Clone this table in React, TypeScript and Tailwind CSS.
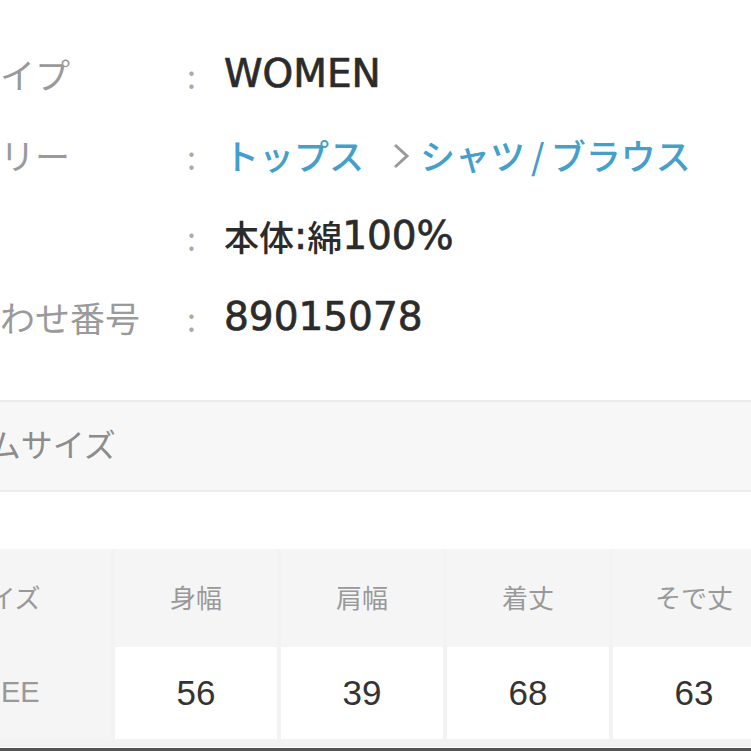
import React from "react";

const jp = { fontFamily: '"Noto Sans CJK JP", "Noto Sans", sans-serif' };
const num = { fontFamily: '"Liberation Sans", Arial, sans-serif' };
const lat = { fontFamily: '"DejaVu Sans", "Noto Sans CJK JP", sans-serif' };

function Row({ label, children }: { label: string; children: React.ReactNode }) {
  return (
    <div className="flex h-[81px] items-center">
      <div className="ml-[-105px] w-[290px] shrink-0 whitespace-nowrap text-[35px] text-[#9a9a9a]">{label}</div>
      <div className="w-[39px] shrink-0 pl-[2px] text-[32px] text-[#aaaaaa]">:</div>
      <div className="flex items-center whitespace-nowrap text-[35px] font-medium text-[#2b2b2b]">{children}</div>
    </div>
  );
}

function L({ children }: { children: React.ReactNode }) {
  return (
    <span className="text-[39px] font-normal [-webkit-text-stroke:0.7px_#2b2b2b]" style={lat}>
      {children}
    </span>
  );
}

export default function App() {
  const heads = ["身幅", "肩幅", "着丈", "そで丈"];
  const vals = ["56", "39", "68", "63"];
  return (
    <div className="relative h-[751px] w-[751px] overflow-hidden bg-white" style={jp}>
      <div className="pt-[34px]">
        <Row label="性別タイプ">
          <L>WOMEN</L>
        </Row>
        <Row label="カテゴリー">
          <span className="text-[#449fca]">トップス</span>
          <svg width="18" height="28" viewBox="0 0 18 28" className="ml-[28px] mr-[10px]">
            <path d="M3 3 L15 14 L3 25" fill="none" stroke="#9a9a9a" strokeWidth="3" />
          </svg>
          <span className="text-[#449fca]">
            シャツ<span className="mx-[6px]">/</span>ブラウス
          </span>
        </Row>
        <Row label="素材">
          本体<L>:</L>綿<L>100%</L>
        </Row>
        <Row label="問い合わせ番号">
          <L>89015078</L>
        </Row>
      </div>
      <div className="mt-[42px] flex h-[92px] items-center border-y-2 border-[#ececec] bg-[#f7f7f7]">
        <div className="ml-[-104px] mt-[-6px] whitespace-nowrap text-[32px] text-[#8c8c8c]">アイテムサイズ</div>
      </div>
      <div className="mt-[57px] ml-[-107px] w-[900px] bg-[#f3f3f3] pb-[8px]">
        <div className="grid grid-cols-[218px_162px_162px_162px_162px] gap-x-[4px]">
          <div className="flex h-[98px] items-center justify-center bg-[#f5f5f5] pb-[4px] text-[26px] text-[#999999]">サイズ</div>
          {heads.map((h) => (
            <div key={h} className="flex h-[98px] items-center justify-center bg-[#f5f5f5] pb-[4px] text-[26px] text-[#999999]">{h}</div>
          ))}
          <div className="flex h-[92px] items-center justify-center bg-[#f5f5f5] pr-[2px] text-[29px] text-[#999999]" style={num}>FREE</div>
          {vals.map((v) => (
            <div key={v} className="flex h-[92px] items-center justify-center bg-white text-[35px] text-[#333333]" style={num}>{v}</div>
          ))}
        </div>
      </div>
      <div className="absolute bottom-0 left-0 h-[3px] w-full bg-[#555555]" />
    </div>
  );
}
